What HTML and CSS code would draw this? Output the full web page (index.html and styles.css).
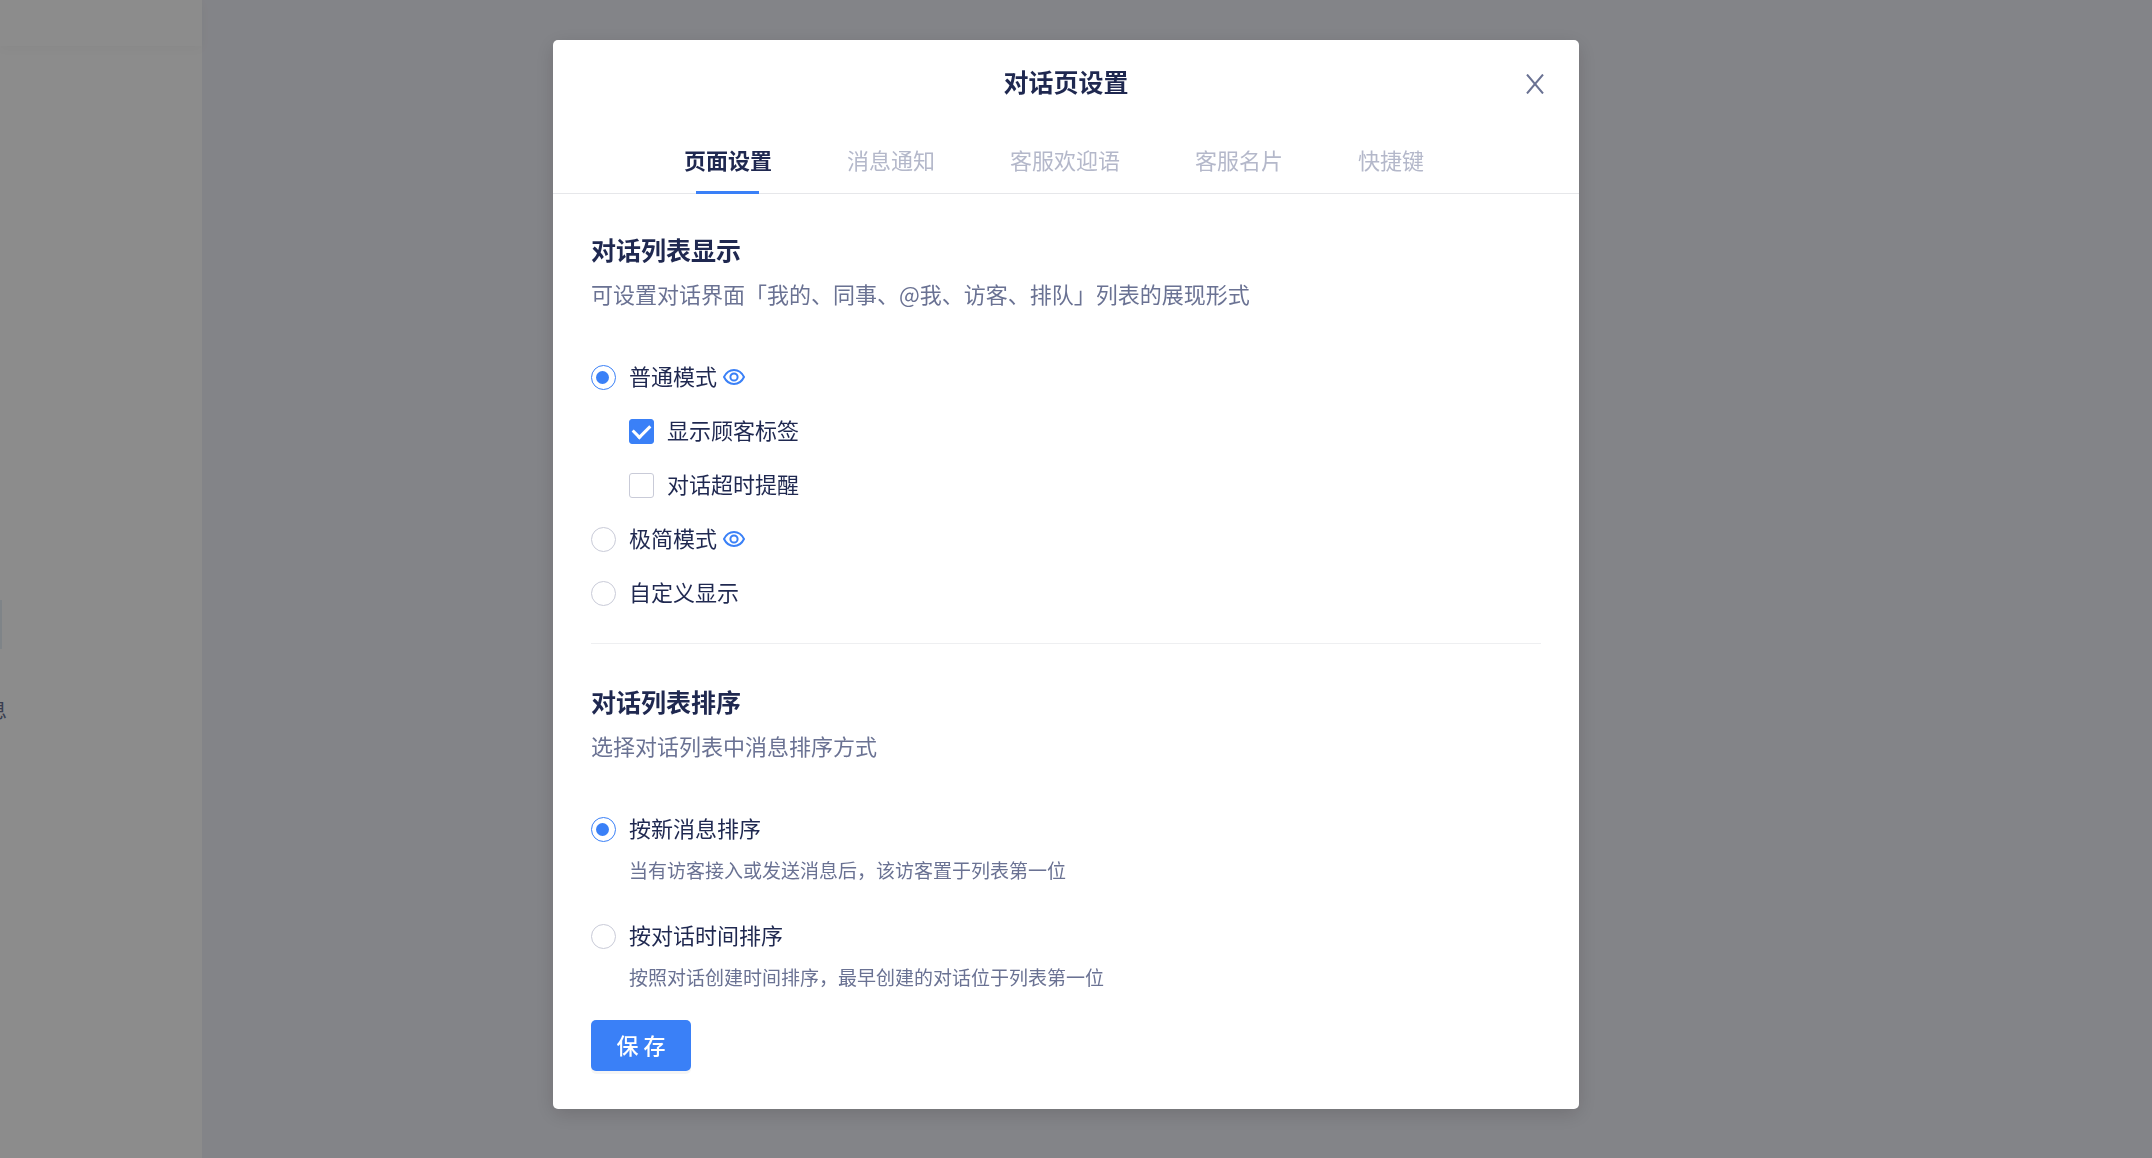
FILE: index.html
```html
<!DOCTYPE html>
<html lang="zh-CN">
<head>
<meta charset="utf-8">
<title>对话页设置</title>
<link rel="stylesheet" href="styles.css">
</head>
<body>
<svg class="sprite" aria-hidden="true">
  <symbol id="eye" viewBox="0 0 22 18">
    <path d="M1 9C3.200 4.500 6.700 2 11 2s7.800 2.500 10 7c-2.200 4.500-5.700 7-10 7S3.200 13.500 1 9z"/>
    <circle cx="11" cy="9" r="3.600"/>
  </symbol>
</svg>
<div class="app">
  <aside class="sidebar">
    <div class="sidebar-head"></div>
    <div class="sidebar-item"></div>
    <div class="sidebar-text"><span>息</span></div>
  </aside>
</div>
<div class="mask">
  <section class="modal" role="dialog" aria-labelledby="modal-title">
    <header class="modal-head">
      <h1 class="title" id="modal-title">对话页设置</h1>
      <button class="close" type="button" aria-label="关闭">
        <svg width="18" height="20" viewBox="0 0 18 20"><path d="M1 0.500L17 19.500M17 0.500L1 19.500"/></svg>
      </button>
    </header>
    <nav class="tabs">
      <a class="tab active" href="#page">页面设置</a>
      <a class="tab" href="#notice">消息通知</a>
      <a class="tab" href="#welcome">客服欢迎语</a>
      <a class="tab" href="#card">客服名片</a>
      <a class="tab" href="#keys">快捷键</a>
    </nav>
    <form class="body">
      <section class="group">
        <h2 class="heading">对话列表显示</h2>
        <p class="desc">可设置对话界面「我的、同事、@我、访客、排队」列表的展现形式</p>
        <div class="options">
          <div class="row">
            <label class="option"><input class="radio" type="radio" name="mode" checked><span class="text">普通模式</span></label>
            <button class="preview" type="button" aria-label="预览普通模式"><svg class="eye"><use href="#eye"/></svg></button>
          </div>
          <label class="option sub"><input class="check" type="checkbox" checked><span class="text">显示顾客标签</span></label>
          <label class="option sub"><input class="check" type="checkbox"><span class="text">对话超时提醒</span></label>
          <div class="row">
            <label class="option"><input class="radio" type="radio" name="mode"><span class="text">极简模式</span></label>
            <button class="preview" type="button" aria-label="预览极简模式"><svg class="eye"><use href="#eye"/></svg></button>
          </div>
          <label class="option"><input class="radio" type="radio" name="mode"><span class="text">自定义显示</span></label>
        </div>
      </section>
      <hr class="divider">
      <section class="group">
        <h2 class="heading">对话列表排序</h2>
        <p class="desc">选择对话列表中消息排序方式</p>
        <div class="options sort">
          <div>
            <label class="option"><input class="radio" type="radio" name="sort" checked><span class="text">按新消息排序</span></label>
            <p class="hint">当有访客接入或发送消息后，该访客置于列表第一位</p>
          </div>
          <div>
            <label class="option"><input class="radio" type="radio" name="sort"><span class="text">按对话时间排序</span></label>
            <p class="hint">按照对话创建时间排序，最早创建的对话位于列表第一位</p>
          </div>
        </div>
      </section>
      <button class="save" type="button">保 存</button>
    </form>
  </section>
</div>
</body>
</html>
```
FILE: styles.css
```css
* {
  box-sizing: border-box;
}

body {
  margin: 0;
  font-family: "Noto Sans CJK SC", sans-serif;
  font-size: 22px;
  line-height: 32px;
  color: #1f2850;
}

h1, h2, p {
  margin: 0;
}

button {
  padding: 0;
  border: 0;
  background: none;
  font: inherit;
  cursor: pointer;
}

.sprite {
  display: none;
}

/* Page behind the dialog */
.app {
  display: flex;
  height: 100vh;
  background: #eff0f7;
}

.sidebar {
  width: 202px;
  background: #fff;
}

.sidebar-head {
  height: 46px;
  box-shadow: 0 3px 10px rgba(0, 0, 0, 0.03);
}

.sidebar-item {
  width: 2px;
  height: 49px;
  margin-top: 554px;
  background: #e8f0f8;
}

.sidebar-text {
  display: flex;
  justify-content: flex-end;
  width: 7px;
  margin-top: 45px;
  overflow: hidden;
  font-size: 20px;
  color: #6a7293;
}

/* Dialog */
.mask {
  position: fixed;
  inset: 0;
  display: flex;
  align-items: flex-start;
  justify-content: center;
  padding: 40px 20px 40px 0;
  overflow: auto;
  background: rgba(0, 0, 0, 0.45);
}

.modal {
  width: 100%;
  max-width: 1026px;
  border-radius: 5px;
  background: #fff;
  box-shadow: 0 5px 20px rgba(0, 0, 0, 0.15);
}

.modal-head {
  display: grid;
  grid-template-columns: 1fr auto 1fr;
  align-items: end;
  padding: 23px 35px 26px;
}

.title {
  grid-column: 2;
  font-size: 25px;
  line-height: 36px;
  font-weight: 700;
}

.close {
  display: flex;
  justify-self: end;
  padding-bottom: 5px;
}

.close path {
  fill: none;
  stroke: #6a7293;
  stroke-width: 2;
}

.tabs {
  display: flex;
  justify-content: center;
  gap: 75px;
  padding: 18px 24px 0 0;
  border-bottom: 1px solid #e6e7ea;
}

.tab {
  display: flex;
  flex-direction: column;
  align-items: center;
  height: 51px;
  margin-bottom: -1px;
  color: #b4b8ca;
  text-decoration: none;
}

.tab.active {
  color: #1f2850;
  font-weight: 700;
}

.tab.active::after {
  content: "";
  width: 63px;
  height: 3px;
  margin-top: auto;
  background: #3a80f7;
}

.body {
  padding: 37px 38px 38px;
}

.heading {
  font-size: 25px;
  line-height: 36px;
  font-weight: 700;
}

.desc {
  margin-top: 10px;
  color: #6a7293;
}

.options {
  display: flex;
  flex-direction: column;
  gap: 22px;
  margin-top: 52px;
}

.row {
  display: flex;
  align-items: center;
  gap: 6px;
}

.option {
  display: flex;
  align-items: center;
  gap: 13px;
}

.text {
  padding-bottom: 4px;
  line-height: 28px;
}

.sub {
  margin-left: 38px;
}

.radio,
.check {
  display: grid;
  place-items: center;
  width: 25px;
  height: 25px;
  margin: 0;
  border: 1px solid #c9cbd8;
  background: #fff;
  appearance: none;
}

.radio {
  border-radius: 50%;
}

.check {
  border-radius: 3px;
}

.radio:checked {
  border-color: #3a80f7;
}

.radio:checked::before {
  content: "";
  width: 13px;
  height: 13px;
  margin-right: 2px;
  border-radius: 50%;
  background: #3a80f7;
}

.check:checked {
  border-color: #3a80f7;
  background: #3a80f7;
}

.check:checked::before {
  content: "";
  width: 8px;
  height: 14px;
  margin-bottom: 3px;
  border: solid #fff;
  border-width: 0 3px 3px 0;
  transform: rotate(45deg);
}

.preview {
  display: flex;
}

.eye {
  width: 22px;
  height: 18px;
  fill: none;
  stroke: #3a80f7;
  stroke-width: 2;
}

.divider {
  height: 1px;
  margin: 34px 0 39px;
  border: 0;
  background: #eeeff1;
}

.sort {
  gap: 36px;
}

.hint {
  margin: 11px 0 0 38px;
  font-size: 19px;
  line-height: 28px;
  color: #6a7293;
}

.save {
  width: 100px;
  height: 51px;
  margin-top: 29px;
  padding-bottom: 3px;
  border-radius: 5px;
  background: #3a80f7;
  box-shadow: 0 3px 0 rgba(0, 0, 0, 0.04);
  color: #fff;
  font-weight: 500;
}
```
